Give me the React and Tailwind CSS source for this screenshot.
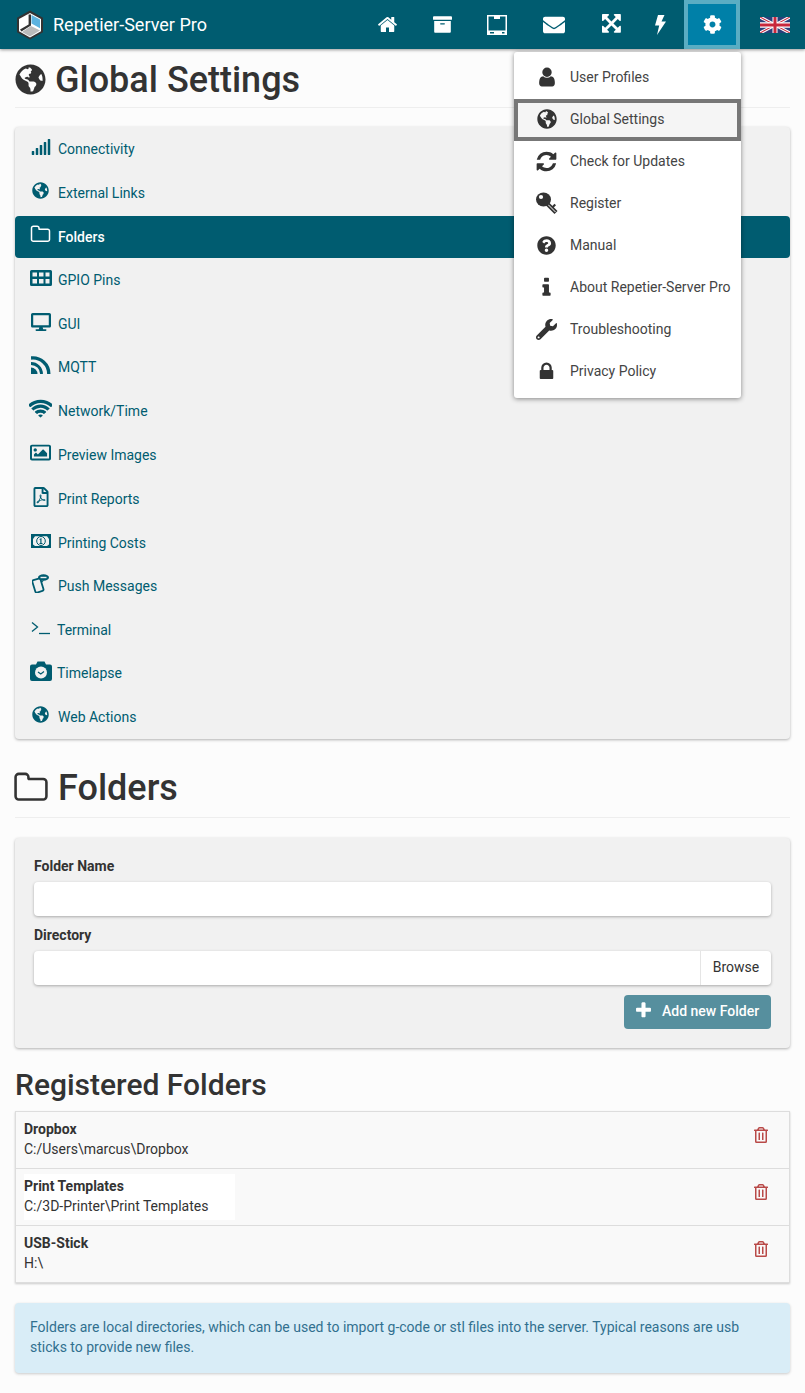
import React from "react";
import {
  FaArchive, FaEnvelope, FaCog, FaGlobeAmericas, FaQuestionCircle, FaWrench, FaSignal, FaDesktop,
  FaRegImage, FaRegFilePdf, FaRegTrashAlt,
} from "react-icons/fa";

const P = {
  home: "M1472 992v480q0 26-19 45t-45 19h-384v-384h-256v384h-384q-26 0-45-19t-19-45v-480q0-1 .5-3t.5-3l575-474 575 474q1 2 1 6zm223-69l-62 74q-8 9-21 11h-3q-13 0-21-7l-692-577-692 577q-12 8-24 7-13-2-21-11l-62-74q-8-10-7-23.500t11-21.500l719-599q32-26 76-26t76 26l244 204v-195q0-14 9-23t23-9h192q14 0 23 9t9 23v408l219 182q10 8 11 21.500t-7 23.500z",
  refresh: "M1639 1056q0 5-1 7-64 268-268 434.500t-478 166.500q-146 0-282.500-55t-243.500-157l-129 129q-19 19-45 19t-45-19-19-45v-448q0-26 19-45t45-19h448q26 0 45 19t19 45-19 45l-137 137q71 66 161 102t187 36q134 0 250-65t186-179q11-17 53-117 8-23 30-23h192q13 0 22.500 9.500t9.500 22.500zm25-800v448q0 26-19 45t-45 19h-448q-26 0-45-19t-19-45 19-45l138-138q-148-137-349-137-134 0-250 65t-186 179q-11 17-53 117-8 23-30 23h-199q-13 0-22.500-9.500t-9.500-22.500v-7q65-268 270-434.500t480-166.500q146 0 284 55.500t245 156.500l130-129q19-19 45-19t45 19 19 45z",
  user: "M1536 1399q0 109-62.500 187t-150.500 78h-854q-88 0-150.500-78t-62.500-187q0-85 8.500-160.500t31.500-152 58.500-131 94-89 134.500-34.500q131 128 313 128t313-128q76 0 134.500 34.500t94 89 58.500 131 31.500 152 8.500 160.500zm-256-887q0 159-112.500 271.500t-271.500 112.500-271.500-112.500-112.500-271.500 112.500-271.500 271.500-112.500 271.500 112.500 112.500 271.500z",
  lock: "M640 768h512v-192q0-106-75-181t-181-75-181 75-75 181v192zm832 96v576q0 40-28 68t-68 28h-960q-40 0-68-28t-28-68v-576q0-40 28-68t68-28h32v-192q0-184 132-316t316-132 316 132 132 316v192h32q40 0 68 28t28 68z",
  info: "M1216 1344v128q0 26-19 45t-45 19h-512q-26 0-45-19t-19-45v-128q0-26 19-45t45-19h64v-384h-64q-26 0-45-19t-19-45v-128q0-26 19-45t45-19h384q26 0 45 19t19 45v576h64q26 0 45 19t19 45zm-128-1152v192q0 26-19 45t-45 19h-256q-26 0-45-19t-19-45v-192q0-26 19-45t45-19h256q26 0 45 19t19 45z",
  wifi: "M896 1523q-20 0-93-73.500t-73-93.500q0-32 62.500-54t103.500-22 103.500 22 62.500 54q0 20-73 93.500t-93 73.500zm270-271q-2 0-40-25t-101.500-50-128.500-25-128.500 25-101 50-40.500 25q-18 0-93.500-75t-75.500-93q0-13 10-23 78-77 196-121t233-44 233 44 196 121q10 10 10 23 0 18-75.500 93t-93.500 75zm273-272q-11 0-23-8-136-105-252-154.500t-268-49.500q-85 0-170.500 22t-149 53-113.500 62-79 53-31 22q-17 0-92-75t-75-93q0-12 10-22 132-132 320-205t380-73 380 73 320 205q10 10 10 22 0 18-75 93t-92 75zm271-271q-11 0-22-9-179-157-371.500-236.500t-407.500-79.500-407.500 79.500-371.500 236.500q-11 9-22 9-17 0-92.500-75t-75.500-93q0-13 10-23 187-186 445-288t513-102 513 102 445 288q10 10 10 23 0 18-75.500 93t-92.500 75z",
  folder: "M1600 1312v-704q0-40-28-68t-68-28h-704q-40 0-68-28t-28-68v-64q0-40-28-68t-68-28h-320q-40 0-68 28t-28 68v960q0 40 28 68t68 28h1216q40 0 68-28t28-68zm128-704v704q0 92-66 158t-158 66h-1216q-92 0-158-66t-66-158v-960q0-92 66-158t158-66h320q92 0 158 66t66 158v32h672q92 0 158 66t66 158z",
  plus: "M1600 736v192q0 40-28 68t-68 28h-416v416q0 40-28 68t-68 28h-192q-40 0-68-28t-28-68v-416h-416q-40 0-68-28t-28-68v-192q0-40 28-68t68-28h416v-416q0-40 28-68t68-28h192q40 0 68 28t28 68v416h416q40 0 68 28t28 68z",
  arrows: "M1283 413l-355 355 355 355 144-144q29-31 70-14 39 17 39 59v448q0 26-19 45t-45 19h-448q-42 0-59-40-17-39 14-69l144-144-355-355-355 355 144 144q31 30 14 69-17 40-59 40h-448q-26 0-45-19t-19-45v-448q0-42 40-59 39-17 69 14l144 144 355-355-355-355-144 144q-19 19-45 19-12 0-24-5-40-17-40-59v-448q0-26 19-45t45-19h448q42 0 59 40 17 39-14 69l-144 144 355 355 355-355-144-144q-31-30-14-69 17-40 59-40h448q26 0 45 19t19 45v448q0 42-39 59-13 5-25 5-26 0-45-19z",
};

const Fa4 = ({ d, size }) => (
  <svg width={size} height={size} viewBox="0 0 1792 1792" fill="currentColor">
    <path d={d} />
  </svg>
);

const Logo = () => (
  <svg width="28" height="30" viewBox="0 0 28 30">
    <path d="M14 .5 27 7.800v14.400L14 29.500 1 22.200V7.800z" fill="#333" />
    <path d="M14 3 3 9v12.200l11 6.200 11-6.200V9z" fill="#fff" />
    <path d="M12.600 4.500h2.400v11l-9.600 6-1.400-2 8.600-5z" fill="#333" />
    <path d="M15.500 5 24 9.600v8.600l-4-2.200-4.500-2.500z" fill="#5cb3e0" />
    <path d="M15 16 24 20.500 14 26.500 6 22z" fill="#bbb" />
  </svg>
);

const Printer = () => (
  <svg width="20" height="20" viewBox="0 0 20 20">
    <path fillRule="evenodd" d="M0 0h20v20H0zM1.500 1.500v14h17v-14H13v2.500H7V1.500z" fill="#fff" />
    <rect x="3" y="17" width="4" height="1.500" fill="#005c70" />
    <rect x="15" y="17" width="2.500" height="1.500" fill="#005c70" />
  </svg>
);

const Bolt = () => (
  <svg width="12" height="20" viewBox="0 0 12 20">
    <path d="M4 0H10.500L7.500 6.500h4.500L3 20l2.200-9.500H1z" fill="#fff" />
  </svg>
);

const Flag = () => (
  <svg width="30" height="16" viewBox="0 0 60 30" preserveAspectRatio="none">
    <rect width="60" height="30" fill="#2a3f7a" />
    <path d="M0 0 60 30M60 0 0 30" stroke="#fff" strokeWidth="6" />
    <path d="M0 0 60 30M60 0 0 30" stroke="#c8283c" strokeWidth="2" />
    <path d="M30 0v30M0 15h60" stroke="#fff" strokeWidth="10" />
    <path d="M30 0v30M0 15h60" stroke="#c8283c" strokeWidth="6" />
  </svg>
);

const Key = () => (
  <svg width="22" height="23" viewBox="0 0 22 23">
    <path d="M9.500 10 20 20.500" stroke="#333" strokeWidth="4.200" fill="none" />
    <path d="M10.500 11 19.500 20" stroke="#fff" strokeWidth="1" fill="none" />
    <path d="M15.800 14.500 18.500 11.800 20 13.300 17.300 16z" fill="#333" />
    <ellipse cx="7.500" cy="7.500" rx="7.500" ry="7" fill="#333" />
    <circle cx="5" cy="5" r="2.100" fill="#fff" />
  </svg>
);

const Rss = () => (
  <svg width="20" height="18" viewBox="0 0 20 18" fill="none">
    <path d="M0 18v-6.500A6.500 6.500 0 0 1 6.500 18z" fill="#005c70" />
    <path d="M0 7.500A10.500 10.500 0 0 1 10.500 18" stroke="#005c70" strokeWidth="2.800" />
    <path d="M0 2A16 16 0 0 1 17.800 18" stroke="#005c70" strokeWidth="3.400" />
  </svg>
);

const Grid = () => (
  <svg width="22" height="16" viewBox="0 0 22 16">
    <path
      fillRule="evenodd"
      fill="#005c70"
      d="M1.500 0h19A1.500 1.500 0 0 1 22 1.500v13a1.500 1.500 0 0 1-1.500 1.500h-19A1.500 1.500 0 0 1 0 14.500v-13A1.500 1.500 0 0 1 1.500 0zM2.500 2.500v4h4.500v-4zM9 2.500v4h4.500v-4zM15.500 2.500v4h4v-4zM2.500 9v4.500h4.500V9zM9 9v4.500h4.500V9zM15.500 9v4.500h4V9z"
    />
  </svg>
);

const Money = () => (
  <svg width="20" height="14" viewBox="0 0 20 14">
    <rect width="20" height="14" fill="#005c70" />
    <path d="M4 2.200h12L18 5v5.500L16 12H4L2 10.500V5z" fill="#f1f1f1" />
    <ellipse cx="10" cy="7" rx="4.300" ry="4.500" fill="none" stroke="#005c70" strokeWidth="1" />
    <path d="M8.500 5 10.500 4V9H11.500V10H8.500V9H9.300V5.500L8.500 5.800z" fill="#005c70" />
  </svg>
);

const Terminal = () => (
  <svg width="20" height="14" viewBox="0 0 20 14" fill="none">
    <path d="M1 1.500 6.500 6 1 10.500" stroke="#005c70" strokeWidth="1.300" />
    <path d="M8 12.500h11" stroke="#005c70" strokeWidth="1.300" />
  </svg>
);

const Push = () => (
  <svg width="18" height="19" viewBox="0 0 18 19">
    <rect x="1.500" y="5" width="8.500" height="13" rx="1.500" transform="rotate(-17 6 11)" fill="none" stroke="#005c70" strokeWidth="1.800" />
    <ellipse cx="11.500" cy="3.500" rx="5.500" ry="3.300" fill="#005c70" />
    <rect x="8.500" y="2.800" width="6" height="1.400" fill="#f1f1f1" />
    <path d="M9.500 6.500 9 9.500 12 6.500z" fill="#005c70" />
  </svg>
);

const Timelapse = () => (
  <svg width="22" height="20" viewBox="0 0 22 20">
    <path d="M2 3.500h4L7.500.5h7L16 3.500h4a2 2 0 0 1 2 2V18a2 2 0 0 1-2 2H2a2 2 0 0 1-2-2V5.500a2 2 0 0 1 2-2z" fill="#005c70" />
    <circle cx="11" cy="11.500" r="6" fill="#f1f1f1" />
    <path d="M8 11 10.800 13 14 10.500" fill="none" stroke="#005c70" strokeWidth="1.200" />
  </svg>
);

const menu = [
  ["Connectivity", <FaSignal size={20} />],
  ["External Links", <FaGlobeAmericas size={17} />],
  ["Folders", <Fa4 d={P.folder} size={21} />, "active"],
  ["GPIO Pins", <Grid />],
  ["GUI", <FaDesktop size={20} />],
  ["MQTT", <Rss />],
  ["Network/Time", <Fa4 d={P.wifi} size={23} />],
  ["Preview Images", <FaRegImage size={21} />],
  ["Print Reports", <FaRegFilePdf size={20} />, "down"],
  ["Printing Costs", <Money />, "down"],
  ["Push Messages", <Push />],
  ["Terminal", <Terminal />, "tight"],
  ["Timelapse", <Timelapse />, "tight"],
  ["Web Actions", <FaGlobeAmericas size={17} />],
];

const dropdown = [
  ["User Profiles", <Fa4 d={P.user} size={22} />],
  ["Global Settings", <FaGlobeAmericas size={20} />, true],
  ["Check for Updates", <Fa4 d={P.refresh} size={23} />],
  ["Register", <Key />],
  ["Manual", <FaQuestionCircle size={19} />],
  ["About Repetier-Server Pro", <Fa4 d={P.info} size={23} />],
  ["Troubleshooting", <FaWrench size={21} />],
  ["Privacy Policy", <Fa4 d={P.lock} size={21} />],
];

const folders = [
  ["Dropbox", "C:/Users\\marcus\\Dropbox"],
  ["Print Templates", "C:/3D-Printer\\Print Templates", true],
  ["USB-Stick", "H:\\"],
];

const navItems = [
  ["w-[54px] pr-[2px]", <Fa4 d={P.home} size={21} />],
  ["w-[54px]", <FaArchive size={19} />],
  ["w-[56px]", <Printer />],
  ["w-[58px]", <FaEnvelope size={22} />],
  ["w-[56px] pl-[4px]", <Fa4 d={P.arrows} size={22} />],
  ["w-[45px] pr-[3px]", <Bolt />],
];

export default function App() {
  return (
    <div className="relative min-h-[1393px] bg-[#fcfcfc] font-['Roboto',sans-serif] text-sm text-[#333]">
      <header className="flex h-[49px] items-center bg-[#005c70] text-white shadow-[0_1px_3px_rgba(0,0,0,0.4)]">
        <div className="ml-4 flex items-center gap-[9px]">
          <Logo />
          <span className="text-[18px] font-normal">Repetier-Server Pro</span>
        </div>
        <nav className="ml-auto flex h-full items-center">
          {navItems.map(([w, icon], i) => (
            <div key={i} className={`flex h-full items-center justify-center ${w}`}>{icon}</div>
          ))}
          <div className="flex h-full w-[56px] items-center justify-center border-4 border-[#5aadc3] bg-[#0080a8]">
            <FaCog size={19} />
          </div>
          <div className="flex h-full w-[65px] items-center justify-center pl-[5px]"><Flag /></div>
        </nav>
      </header>

      <div className="absolute left-[514px] top-[52px] z-10 w-[227px] rounded-[3px] bg-white pb-[6px] pt-1 shadow-[0_1px_5px_rgba(0,0,0,0.45)]">
        {dropdown.map(([label, icon, active]) => (
          <div
            key={label}
            className={`flex h-[42px] items-center ${active ? "relative top-px border-4 border-[#777] bg-[#f5f5f5] pb-[2px]" : ""}`}
          >
            <span className={`flex w-[33px] justify-center text-[#333] ${active ? "ml-[12px]" : "ml-[16px]"}`}>{icon}</span>
            <span className="ml-[7px] whitespace-nowrap text-[#444]">{label}</span>
          </div>
        ))}
      </div>

      <main className="px-[15px]">
        <h1 className="flex h-[59px] items-center gap-[9px] border-b border-[#eee] pt-[3px] text-[36px] font-medium leading-none">
          <FaGlobeAmericas size={31} />
          <span>Global Settings</span>
        </h1>

        <div className="mt-[19px] h-[612px] rounded-[4px] bg-[#f1f1f1] shadow-[0_1px_3px_rgba(0,0,0,0.3)]">
          {menu.map(([label, icon, mode]) => (
            <div key={label} className="h-[43.714px]">
              <div
                className={`relative flex items-center ${
                  mode === "active"
                    ? "top-[1.5px] h-[42px] rounded-[4px] bg-[#005c70] text-white"
                    : mode === "down"
                      ? "top-px h-full text-[#005c70]"
                      : "h-full text-[#005c70]"
                }`}
              >
                <span className="flex w-[43px] -translate-y-[2px] justify-center pl-[8px]">{icon}</span>
                <span className={mode === "active" ? "font-medium" : mode === "tight" ? "-ml-px" : ""}>{label}</span>
              </div>
            </div>
          ))}
        </div>

        <h1 className="mt-[20px] flex h-[59px] items-center gap-[9px] border-b border-[#eee] text-[36px] font-medium leading-none">
          <span className="-ml-[2px]"><Fa4 d={P.folder} size={36} /></span>
          <span>Folders</span>
        </h1>

        <section className="mt-[20px] h-[210px] rounded-[4px] bg-[#f1f1f1] px-[19px] pt-[19px] shadow-[0_1px_3px_rgba(0,0,0,0.3)]">
          <label className="block h-[25px] font-bold leading-[18px]">Folder Name</label>
          <div className="h-[34px] rounded-[4px] bg-white shadow-[0_1px_3px_rgba(0,0,0,0.3)]" />
          <label className="mt-[10px] block h-[25px] font-bold leading-[18px]">Directory</label>
          <div className="flex h-[34px] rounded-[4px] bg-white shadow-[0_1px_3px_rgba(0,0,0,0.3)]">
            <div className="flex-1" />
            <div className="flex w-[71px] items-center justify-center border-l border-[#e5e5e5] pb-[2px]">Browse</div>
          </div>
          <div className="mt-[10px] flex justify-end">
            <button className="flex h-[34px] w-[147px] items-center rounded-[4px] bg-[#568f9e] pb-[3px] pl-[10px] font-medium text-white">
              <Fa4 d={P.plus} size={19} />
              <span className="ml-[9px]">Add new Folder</span>
            </button>
          </div>
        </section>

        <h2 className="mt-[19px] text-[30px] font-medium leading-[36px]">Registered Folders</h2>

        <div className="mt-[8px] border border-[#ddd] bg-[#f9f9f9] shadow-[0_1px_2px_rgba(0,0,0,0.2)]">
          {folders.map(([name, path, hl], i) => (
            <div key={name} className={`relative flex items-start justify-between pl-[8px] pr-[20px] pt-[7px] ${i ? "h-[57px] border-t border-[#ddd]" : "h-[56px]"}`}>
              <div className={`leading-[20px] ${hl ? "-mt-[2px] w-[211px] bg-white pb-[4px] pt-[2px]" : ""}`}>
                <div className="font-bold">{name}</div>
                <div>{path}</div>
              </div>
              <FaRegTrashAlt size={16} className="mt-[8px] text-[#b94a48]" />
            </div>
          ))}
        </div>

        <div className="mt-[20px] h-[70px] rounded-[4px] bg-[#d9edf7] px-[15px] pt-[14px] leading-[20px] text-[#31708f] shadow-[0_1px_3px_rgba(0,0,0,0.2)]">
          Folders are local directories, which can be used to import g-code or stl files into the server. Typical reasons are usb sticks to provide new files.
        </div>
      </main>
    </div>
  );
}
